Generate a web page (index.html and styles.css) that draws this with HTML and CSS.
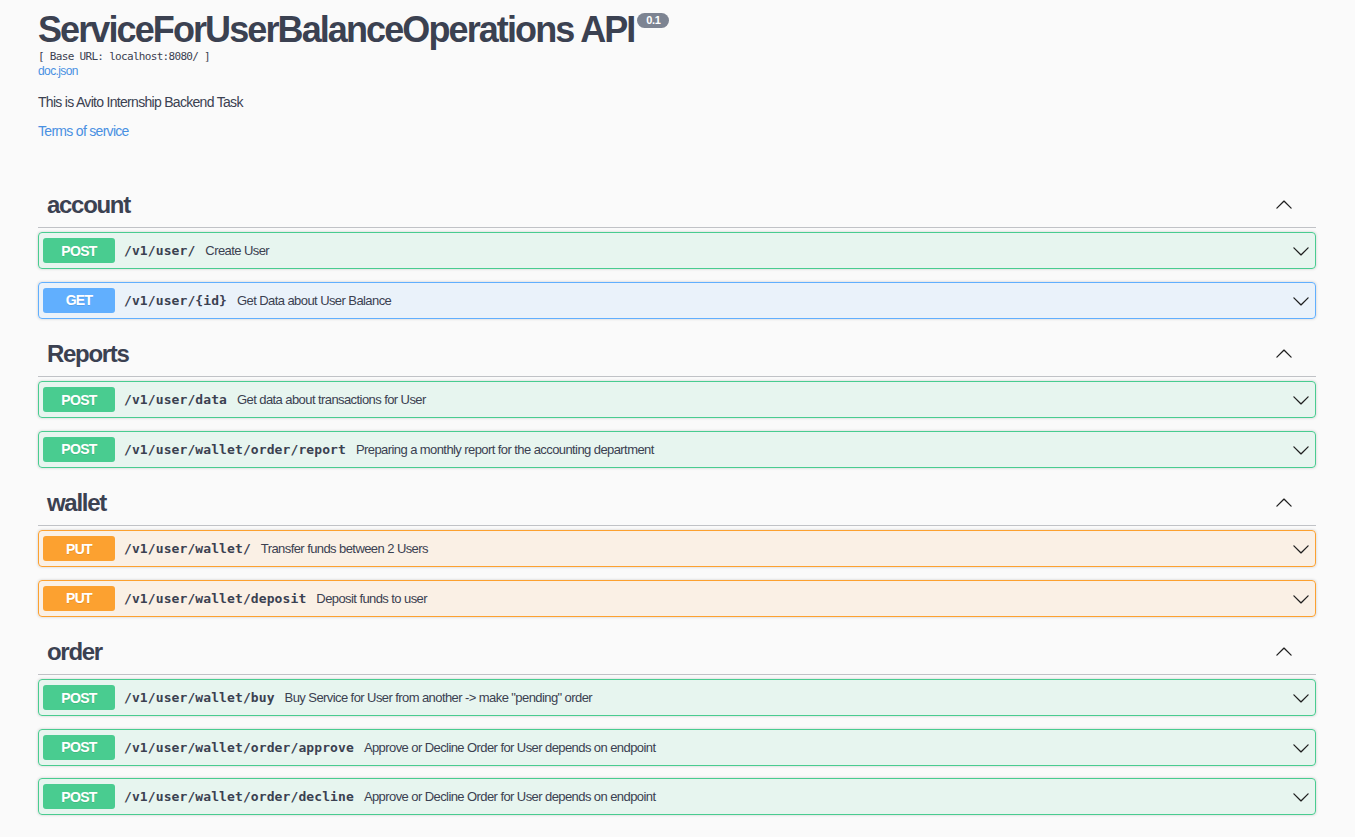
FILE: index.html
```html
<!DOCTYPE html>
<html lang="en">
<head>
<meta charset="utf-8">
<title>ServiceForUserBalanceOperations API</title>
<link rel="stylesheet" href="styles.css">
</head>
<body>
<div class="wrapper">
  <section class="info">
    <div class="title-row">
      <h2 class="title">ServiceForUserBalanceOperations API</h2>
      <span class="version">0.1</span>
    </div>
    <div class="base-url">[ Base URL: localhost:8080/ ]</div>
    <a class="doc-link" href="#">doc.json</a>
    <p class="description">This is Avito Internship Backend Task</p>
    <a class="terms" href="#">Terms of service</a>
  </section>

  <div class="tags">
    <div class="tag">
      <h3 class="tag-header"><span>account</span>
        <svg class="up" viewBox="0 0 20 20" width="18" height="18"><path transform="rotate(180 10 10)" d="M17.418 6.109c.272-.268.709-.268.979 0s.271.701 0 .969l-7.908 7.83c-.27.268-.707.268-.979 0l-7.908-7.83c-.27-.268-.27-.701 0-.969.271-.268.709-.268.979 0L10 13.250l7.418-7.141z"/></svg>
      </h3>
      <div class="op post"><span class="method">POST</span><span class="path">/v1/user/</span><span class="summary">Create User</span><svg class="down" viewBox="0 0 20 20" width="18" height="18"><path d="M17.418 6.109c.272-.268.709-.268.979 0s.271.701 0 .969l-7.908 7.83c-.27.268-.707.268-.979 0l-7.908-7.83c-.27-.268-.27-.701 0-.969.271-.268.709-.268.979 0L10 13.25l7.418-7.141z"/></svg></div>
      <div class="op get"><span class="method">GET</span><span class="path">/v1/user/{id}</span><span class="summary">Get Data about User Balance</span><svg class="down" viewBox="0 0 20 20" width="18" height="18"><path d="M17.418 6.109c.272-.268.709-.268.979 0s.271.701 0 .969l-7.908 7.83c-.27.268-.707.268-.979 0l-7.908-7.83c-.27-.268-.27-.701 0-.969.271-.268.709-.268.979 0L10 13.25l7.418-7.141z"/></svg></div>
    </div>

    <div class="tag">
      <h3 class="tag-header"><span>Reports</span>
        <svg class="up" viewBox="0 0 20 20" width="18" height="18"><path transform="rotate(180 10 10)" d="M17.418 6.109c.272-.268.709-.268.979 0s.271.701 0 .969l-7.908 7.83c-.27.268-.707.268-.979 0l-7.908-7.83c-.27-.268-.27-.701 0-.969.271-.268.709-.268.979 0L10 13.25l7.418-7.141z"/></svg>
      </h3>
      <div class="op post"><span class="method">POST</span><span class="path">/v1/user/data</span><span class="summary">Get data about transactions for User</span><svg class="down" viewBox="0 0 20 20" width="18" height="18"><path d="M17.418 6.109c.272-.268.709-.268.979 0s.271.701 0 .969l-7.908 7.83c-.27.268-.707.268-.979 0l-7.908-7.83c-.27-.268-.27-.701 0-.969.271-.268.709-.268.979 0L10 13.25l7.418-7.141z"/></svg></div>
      <div class="op post"><span class="method">POST</span><span class="path">/v1/user/wallet/order/report</span><span class="summary">Preparing a monthly report for the accounting department</span><svg class="down" viewBox="0 0 20 20" width="18" height="18"><path d="M17.418 6.109c.272-.268.709-.268.979 0s.271.701 0 .969l-7.908 7.83c-.27.268-.707.268-.979 0l-7.908-7.83c-.27-.268-.27-.701 0-.969.271-.268.709-.268.979 0L10 13.25l7.418-7.141z"/></svg></div>
    </div>

    <div class="tag">
      <h3 class="tag-header"><span>wallet</span>
        <svg class="up" viewBox="0 0 20 20" width="18" height="18"><path transform="rotate(180 10 10)" d="M17.418 6.109c.272-.268.709-.268.979 0s.271.701 0 .969l-7.908 7.83c-.27.268-.707.268-.979 0l-7.908-7.83c-.27-.268-.27-.701 0-.969.271-.268.709-.268.979 0L10 13.25l7.418-7.141z"/></svg>
      </h3>
      <div class="op put"><span class="method">PUT</span><span class="path">/v1/user/wallet/</span><span class="summary">Transfer funds between 2 Users</span><svg class="down" viewBox="0 0 20 20" width="18" height="18"><path d="M17.418 6.109c.272-.268.709-.268.979 0s.271.701 0 .969l-7.908 7.83c-.27.268-.707.268-.979 0l-7.908-7.83c-.27-.268-.27-.701 0-.969.271-.268.709-.268.979 0L10 13.25l7.418-7.141z"/></svg></div>
      <div class="op put"><span class="method">PUT</span><span class="path">/v1/user/wallet/deposit</span><span class="summary">Deposit funds to user</span><svg class="down" viewBox="0 0 20 20" width="18" height="18"><path d="M17.418 6.109c.272-.268.709-.268.979 0s.271.701 0 .969l-7.908 7.83c-.27.268-.707.268-.979 0l-7.908-7.83c-.27-.268-.27-.701 0-.969.271-.268.709-.268.979 0L10 13.25l7.418-7.141z"/></svg></div>
    </div>

    <div class="tag">
      <h3 class="tag-header"><span>order</span>
        <svg class="up" viewBox="0 0 20 20" width="18" height="18"><path transform="rotate(180 10 10)" d="M17.418 6.109c.272-.268.709-.268.979 0s.271.701 0 .969l-7.908 7.83c-.27.268-.707.268-.979 0l-7.908-7.83c-.27-.268-.27-.701 0-.969.271-.268.709-.268.979 0L10 13.25l7.418-7.141z"/></svg>
      </h3>
      <div class="op post"><span class="method">POST</span><span class="path">/v1/user/wallet/buy</span><span class="summary">Buy Service for User from another -&gt; make "pending" order</span><svg class="down" viewBox="0 0 20 20" width="18" height="18"><path d="M17.418 6.109c.272-.268.709-.268.979 0s.271.701 0 .969l-7.908 7.83c-.27.268-.707.268-.979 0l-7.908-7.83c-.27-.268-.27-.701 0-.969.271-.268.709-.268.979 0L10 13.25l7.418-7.141z"/></svg></div>
      <div class="op post"><span class="method">POST</span><span class="path">/v1/user/wallet/order/approve</span><span class="summary">Approve or Decline Order for User depends on endpoint</span><svg class="down" viewBox="0 0 20 20" width="18" height="18"><path d="M17.418 6.109c.272-.268.709-.268.979 0s.271.701 0 .969l-7.908 7.83c-.27.268-.707.268-.979 0l-7.908-7.83c-.27-.268-.27-.701 0-.969.271-.268.709-.268.979 0L10 13.25l7.418-7.141z"/></svg></div>
      <div class="op post"><span class="method">POST</span><span class="path">/v1/user/wallet/order/decline</span><span class="summary">Approve or Decline Order for User depends on endpoint</span><svg class="down" viewBox="0 0 20 20" width="18" height="18"><path d="M17.418 6.109c.272-.268.709-.268.979 0s.271.701 0 .969l-7.908 7.83c-.27.268-.707.268-.979 0l-7.908-7.83c-.27-.268-.27-.701 0-.969.271-.268.709-.268.979 0L10 13.25l7.418-7.141z"/></svg></div>
    </div>
  </div>
</div>
</body>
</html>
```
FILE: styles.css
```css
html, body {
  margin: 0;
  padding: 0;
  background: #fafafa;
}
body {
  font-family: "Liberation Sans", Arial, sans-serif;
  color: #3b4151;
}
.wrapper {
  padding: 0 39px 0 38px;
}
.info {
  padding-top: 11px;
}
.title-row {
  display: flex;
  align-items: flex-start;
}
.title {
  margin: 0;
  font-size: 36px;
  line-height: 38px;
  font-weight: 700;
  letter-spacing: -1.9px;
  color: #3b4151;
}
.version {
  margin: 2px 0 0 3px;
  width: 32px;
  height: 15px;
  line-height: 15px;
  text-align: center;
  background: #7d8492;
  color: #fff;
  font-size: 11px;
  font-weight: 700;
  letter-spacing: -0.3px;
  border-radius: 57px;
}
.base-url {
  font-family: "DejaVu Sans Mono", "Liberation Mono", monospace;
  font-size: 11px;
  line-height: 15px;
  letter-spacing: -0.69px;
  color: #3b4151;
}
.doc-link {
  display: block;
  font-size: 12px;
  line-height: 14px;
  letter-spacing: -0.6px;
  color: #4990e2;
  text-decoration: none;
}
.description {
  margin: 14px 0 0;
  font-size: 14px;
  line-height: 20px;
  letter-spacing: -0.7px;
}
.terms {
  display: block;
  margin-top: 9px;
  font-size: 14px;
  line-height: 20px;
  letter-spacing: -0.7px;
  color: #4990e2;
  text-decoration: none;
}
.tags {
  margin-top: 41px;
}
.tag-header {
  display: flex;
  align-items: center;
  justify-content: space-between;
  height: 45px;
  margin: 0 0 4px;
  padding: 0 23px 0 9px;
  border-bottom: 1px solid rgba(59, 65, 81, 0.3);
  font-size: 24px;
  font-weight: 700;
  letter-spacing: -1.3px;
  color: #3b4151;
}
.tag-header svg {
  display: block;
  fill: #1f1f1f;
}
.op {
  display: flex;
  align-items: center;
  height: 35px;
  padding: 0 5px 0 4px;
  margin-bottom: 12.5px;
  border: 1px solid;
  border-radius: 4px;
  box-shadow: 0 0 3px rgba(0, 0, 0, 0.19);
}
.op.post {
  border-color: #49cc90;
  background: rgba(73, 204, 144, 0.1);
}
.op.get {
  border-color: #61affe;
  background: rgba(97, 175, 254, 0.1);
}
.op.put {
  border-color: #fca130;
  background: rgba(252, 161, 48, 0.1);
}
.method {
  display: flex;
  align-items: center;
  justify-content: center;
  flex: none;
  width: 72px;
  height: 25px;
  border-radius: 3px;
  color: #fff;
  font-size: 14px;
  font-weight: 700;
  letter-spacing: -0.7px;
  text-shadow: 0 1px 0 rgba(0, 0, 0, 0.1);
}
.post .method { background: #49cc90; }
.get .method { background: #61affe; }
.put .method { background: #fca130; }
.path {
  padding: 0 10px 0 9px;
  font-family: "DejaVu Sans Mono", "Liberation Mono", monospace;
  font-size: 13px;
  font-weight: 700;
  letter-spacing: 0.1px;
  color: #3b4151;
}
.summary {
  flex: 1;
  font-size: 13px;
  letter-spacing: -0.58px;
  color: #3b4151;
}
.op svg {
  display: block;
  flex: none;
  fill: #1f1f1f;
  margin-top: 1px;
}
```
